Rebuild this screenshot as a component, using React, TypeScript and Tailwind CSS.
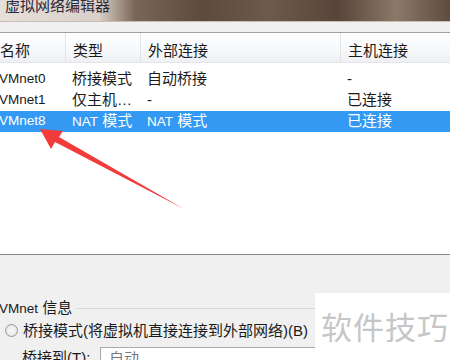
export default function App() {
  const rows = [
    { name: "VMnet0", type: "桥接模式", ext: "自动桥接", host: "-", selected: false },
    { name: "VMnet1", type: "仅主机…", ext: "-", host: "已连接", selected: false },
    { name: "VMnet8", type: "NAT 模式", ext: "NAT 模式", host: "已连接", selected: true },
  ];

  // Latin words in the list are rendered a bit narrower, like Tahoma in the original
  const mixed = (s: string) => {
    if (s.startsWith("NAT")) {
      return (
        <>
          <span className="text-[13.5px]">NAT</span> 模式
        </>
      );
    }
    return s;
  };

  return (
    <div className="relative w-[450px] h-[360px] overflow-hidden bg-[#f0f0f0] text-[15px] text-[#1a1a1a] font-['Liberation_Sans','Noto_Sans_CJK_SC',sans-serif]">
      {/* title bar */}
      <div className="h-[22px] flex items-start bg-[linear-gradient(90deg,#e6e0da_0%,#d9d0c8_22%,#7a6656_30%,#5c4a3d_45%,#6e5a4b_60%,#57453a_75%,#8a7868_88%,#5e4c40_100%)] border-b border-[#c9bdb2]">
        <span className="pl-[5px] -mt-[5px] text-[15px] text-[#2a2a3a]">虚拟网络编辑器</span>
      </div>
      <div className="h-[11px] border-b border-[#a0a0a0] bg-[#f0f0f0]" />

      {/* list */}
      <div className="h-[222px] bg-white border-b border-[#8a8a8a]">
        <div className="h-[30px] flex bg-[linear-gradient(180deg,#ffffff_0%,#f7f8fa_60%,#eef0f3_100%)] border-b border-[#e3e5e8]">
          <div className="w-[66px] pt-[7px] border-r border-[#e2e4e8]">名称</div>
          <div className="w-[75px] pt-[7px] pl-[7px] border-r border-[#e2e4e8]">类型</div>
          <div className="w-[200px] pt-[7px] pl-[7px] border-r border-[#e2e4e8]">外部连接</div>
          <div className="flex-1 pt-[7px] pl-[7px]">主机连接</div>
        </div>
        <div className="pt-[6px]">
          {rows.map((r) => (
            <div
              key={r.name}
              className={
                r.selected
                  ? "h-[21px] flex items-center bg-[#3399f3] text-white"
                  : "h-[21px] flex items-center"
              }
            >
              <div className="w-[66px] -ml-[1px] text-[13.5px]">{r.name}</div>
              <div className="w-[75px] pl-[7px]">{mixed(r.type)}</div>
              <div className="w-[200px] pl-[7px]">{mixed(r.ext)}</div>
              <div className="flex-1 pl-[7px]">{r.host}</div>
            </div>
          ))}
        </div>
      </div>

      {/* VMnet info */}
      <div className="pt-[42px]">
        <div className="flex items-center">
          <span className="-ml-[1px]">
            <span className="text-[13.5px]">VMnet</span> 信息
          </span>
          <div className="ml-[5px] w-[240px] h-px bg-[#d8d8d8]" />
        </div>
        <div className="flex items-center pl-[5px]">
          <span className="w-[13px] h-[13px] rounded-full border border-[#9a9a9a] bg-[radial-gradient(circle,#f4f4f4_30%,#d8d8d8_100%)]" />
          <span className="ml-[5px]">桥接模式(将虚拟机直接连接到外部网络)(B)</span>
        </div>
        <div className="mt-[5px] flex items-center pl-[22px]">
          <span className="w-[78px]">桥接到(T):</span>
          <div className="w-[240px] h-[22px] border border-[#aaaaaa] bg-white pl-[8px] text-[#777]">自动</div>
        </div>
      </div>

      {/* watermark */}
      <div className="absolute left-[315px] top-[293px] w-[135px] h-[67px] bg-white flex items-center pl-[6px]">
        <span className="text-[31px] text-[#c6c6c6] tracking-[1px] font-['Noto_Sans_CJK_SC',sans-serif]">软件技巧</span>
      </div>

      {/* red arrow */}
      <svg className="absolute left-0 top-0" width="450" height="360" viewBox="0 0 450 360">
        <polygon
          points="40,129 63,131 59,137 184,209 55,142 51,149"
          fill="#f23b3b"
        />
      </svg>
    </div>
  );
}
